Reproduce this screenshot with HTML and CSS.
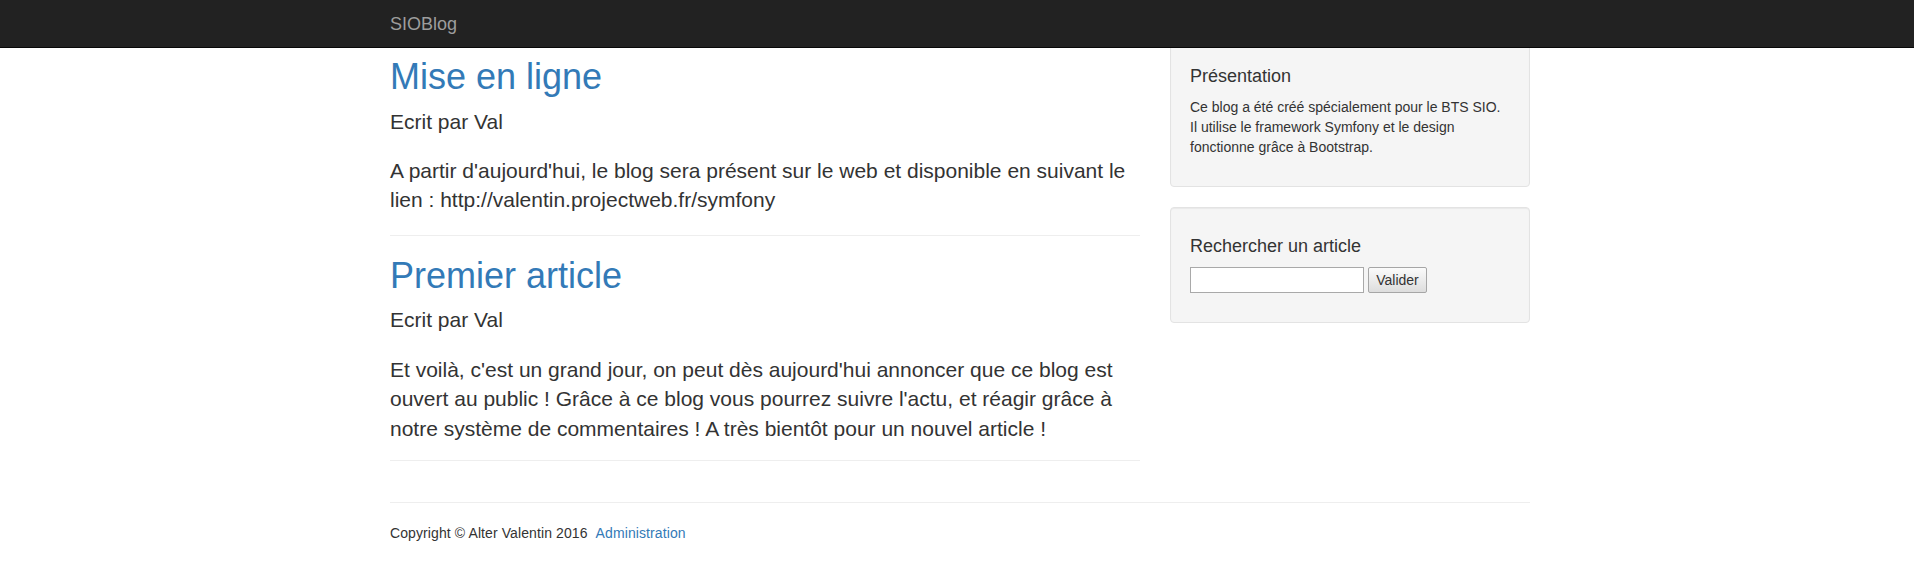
FILE: index.html
```html
<!DOCTYPE html>
<html lang="fr">
<head>
<meta charset="utf-8">
<title>SIOBlog</title>
<link rel="stylesheet" href="styles.css">
</head>
<body>
<nav class="navbar">
  <div class="container">
    <a class="brand" href="#">SIOBlog</a>
  </div>
</nav>
<div class="container page">
  <div class="layout">
    <main class="main">
      <article class="post">
        <h1 class="post-title"><a href="#">Mise en ligne</a></h1>
        <p class="lead">Ecrit par Val</p>
        <p class="lead">A partir d'aujourd'hui, le blog sera présent sur le web et disponible en suivant le lien : http://valentin.projectweb.fr/symfony</p>
        <hr class="sep">
      </article>
      <article class="post">
        <h1 class="post-title"><a href="#">Premier article</a></h1>
        <p class="lead">Ecrit par Val</p>
        <p class="lead">Et voilà, c'est un grand jour, on peut dès aujourd'hui annoncer que ce blog est ouvert au public ! Grâce à ce blog vous pourrez suivre l'actu, et réagir grâce à notre système de commentaires ! A très bientôt pour un nouvel article !</p>
        <hr class="sep sep-last">
      </article>
    </main>
    <aside class="side">
      <div class="well">
        <h4 class="well-title">Présentation</h4>
        <p class="well-text">Ce blog a été créé spécialement pour le BTS SIO.<br>Il utilise le framework Symfony et le design<br>fonctionne grâce à Bootstrap.</p>
      </div>
      <div class="well">
        <h4 class="well-title">Rechercher un article</h4>
        <form class="search">
          <input class="search-input" type="text"><button class="search-btn" type="button">Valider</button>
        </form>
      </div>
    </aside>
  </div>
  <footer class="footer">
    <hr class="footer-sep">
    <p class="footer-text">Copyright © Alter Valentin 2016 &nbsp;<a href="#">Administration</a></p>
  </footer>
</div>
</body>
</html>
```

FILE: styles.css
```css
* { box-sizing: border-box; }
html, body { margin: 0; padding: 0; }
body {
  font-family: "Liberation Sans", Arial, Helvetica, sans-serif;
  font-size: 14px;
  line-height: 20px;
  color: #333;
  background: #fff;
}
a { color: #337ab7; text-decoration: none; }

.container {
  width: 1170px;
  margin-left: calc(50% - 582px);
  padding: 0 15px;
}

.navbar {
  position: fixed;
  top: 0; left: 0; right: 0;
  height: 48px;
  background: #222;
  border-bottom: 1px solid #080808;
  z-index: 10;
}
.brand {
  display: block;
  color: #9d9d9d;
  font-size: 18px;
  line-height: 20px;
  padding: 14px 0 13px;
}

.page { padding-top: 37px; }
.layout {
  display: grid;
  grid-template-columns: 750px 360px;
  column-gap: 30px;
  align-items: start;
}

.post-title {
  font-size: 36px;
  font-weight: 500;
  line-height: 1.1;
  margin: 20px 0 10px;
}
.lead {
  font-size: 21px;
  line-height: 1.4;
  font-weight: 300;
  margin: 0 0 20px;
}
.sep {
  margin: 20px 0;
  border: 0;
  border-top: 1px solid #eee;
}
.post:last-child .lead:last-of-type { margin-bottom: 17px; }
.sep-last { margin-top: 17px; }

.well {
  background: #f5f5f5;
  border: 1px solid #e3e3e3;
  border-radius: 4px;
  box-shadow: inset 0 1px 1px rgba(0,0,0,.05);
  padding: 19px;
  margin-bottom: 20px;
}
.well-title {
  font-size: 18px;
  font-weight: 500;
  line-height: 1.1;
  margin: 10px 0 10px;
}
.well-text { margin: 0 0 10px; font-size: 14px; }
.search { margin: 0 0 10px; display: flex; gap: 4px; }
.search-input {
  width: 174px;
  height: 26px;
  border: 1px solid #a9a9a9;
  background: #fff;
  padding: 1px 2px;
  font: inherit;
}
.search-btn {
  width: 59px;
  height: 26px;
  border: 1px solid #a6a6a6;
  border-radius: 2px;
  background: linear-gradient(#fbfbfb, #dddddd);
  font: inherit;
  color: #333;
  padding: 0;
}

.footer-sep {
  margin: 21px 0 20px;
  border: 0;
  border-top: 1px solid #eee;
}
.footer-text { margin: 0 0 10px; font-size: 14px; letter-spacing: 0.1px; }
```
